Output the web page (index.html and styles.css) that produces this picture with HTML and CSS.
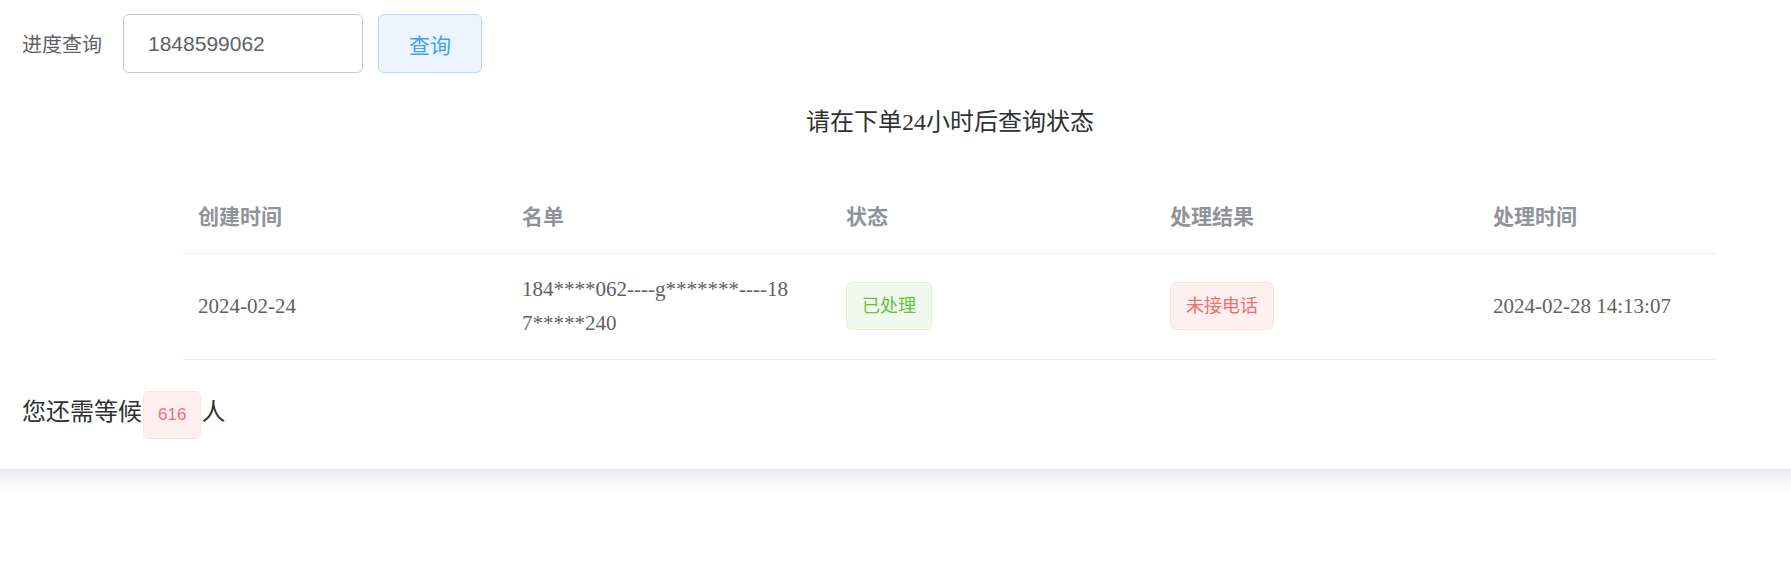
FILE: index.html
```html
<!DOCTYPE html>
<html lang="zh-CN">
<head>
    <meta charset="UTF-8">
    <meta name="viewport" content="width=device-width, initial-scale=1.0">
    <title>进度查询</title>
    <link rel="stylesheet" href="styles.css">
</head>
<body>
    <div class="query-card">
        <!-- Search form -->
        <form class="query-form">
            <label for="phone" class="query-label">进度查询</label>
            <input type="text" id="phone" class="query-input" value="1848599062">
            <button type="button" class="query-button">查询</button>
        </form>

        <!-- Result table -->
        <div class="result">
            <div class="result-title">请在下单24小时后查询状态</div>
            <div class="result-table">
                <div class="cell head">创建时间</div>
                <div class="cell head">名单</div>
                <div class="cell head">状态</div>
                <div class="cell head">处理结果</div>
                <div class="cell head">处理时间</div>

                <div class="cell">2024-02-24</div>
                <div class="cell"><span class="name-text">184****062----g*******----187*****240</span></div>
                <div class="cell"><span class="tag tag-success">已处理</span></div>
                <div class="cell"><span class="tag tag-danger">未接电话</span></div>
                <div class="cell">2024-02-28 14:13:07</div>
            </div>
        </div>

        <!-- Queue -->
        <div class="wait-line">您还需等候<span class="tag tag-danger tag-count">616</span>人</div>
    </div>
    <div class="card-shadow"></div>
</body>
</html>
```

FILE: styles.css
```css
body {
    margin: 0;
    background-color: #fff;
    font-family: "Liberation Serif", "Noto Sans CJK SC", serif;
}
.query-card {
    padding: 14px 0 30px 22px;
    background-color: #fff;
}
/* soft shadow under the card */
.card-shadow {
    height: 26px;
    background: linear-gradient(to bottom, #e9e9ef 0%, #f4f4f7 35%, #fbfbfc 70%, #ffffff 100%);
}
.query-form {
    display: flex;
    align-items: center;
    height: 59px;
    margin: 0;
    font-family: "Liberation Sans", "Noto Sans CJK SC", sans-serif;
}
.query-label {
    font-size: 20px;
    color: #606266;
    margin-right: 21px;
}
.query-input {
    box-sizing: border-box;
    width: 240px;
    height: 59px;
    padding: 0 24px;
    border: 1px solid #c8cad3;
    border-radius: 6px;
    font-family: inherit;
    font-size: 21px;
    color: #606266;
    outline: none;
}
.query-button {
    box-sizing: border-box;
    height: 59px;
    margin-left: 15px;
    padding: 0 30px;
    border: 1px solid #b3d8ff;
    border-radius: 6px;
    background-color: #ecf5ff;
    color: #409eff;
    font-family: inherit;
    font-size: 21px;
    cursor: pointer;
}
.result {
    width: 1534px;
    margin-left: 161px;
}
.result-title {
    margin-top: 33px;
    text-align: center;
    font-size: 24px;
    line-height: 32px;
    color: #303133;
}
.result-table {
    display: grid;
    grid-template-columns: 324px 324px 324px 323px 1fr;
    margin-top: 44px;
}
.cell {
    display: flex;
    align-items: center;
    padding: 18px 15px;
    font-size: 21px;
    line-height: 34.5px;
    color: #606266;
    border-bottom: 1px solid #ebeef5;
}
.cell.head {
    color: #909399;
    font-weight: 700;
}
.name-text {
    display: block;
    max-width: 270px;
    word-break: break-all;
}
.tag {
    display: inline-block;
    box-sizing: border-box;
    height: 48px;
    line-height: 46px;
    padding: 0 15px;
    border: 1px solid;
    border-radius: 6px;
    font-size: 18px;
}
.tag-success {
    background-color: #f0f9eb;
    border-color: #e1f3d8;
    color: #67c23a;
}
.tag-danger {
    background-color: #fef0f0;
    border-color: #fde2e2;
    color: #f56c6c;
}
.wait-line {
    display: flex;
    align-items: baseline;
    margin-top: 31px;
    font-size: 24px;
    color: #303133;
}
.tag-count {
    font-family: "Liberation Sans", sans-serif;
    font-size: 17px;
    padding: 0 14px;
    margin-left: 1px;
}
```
